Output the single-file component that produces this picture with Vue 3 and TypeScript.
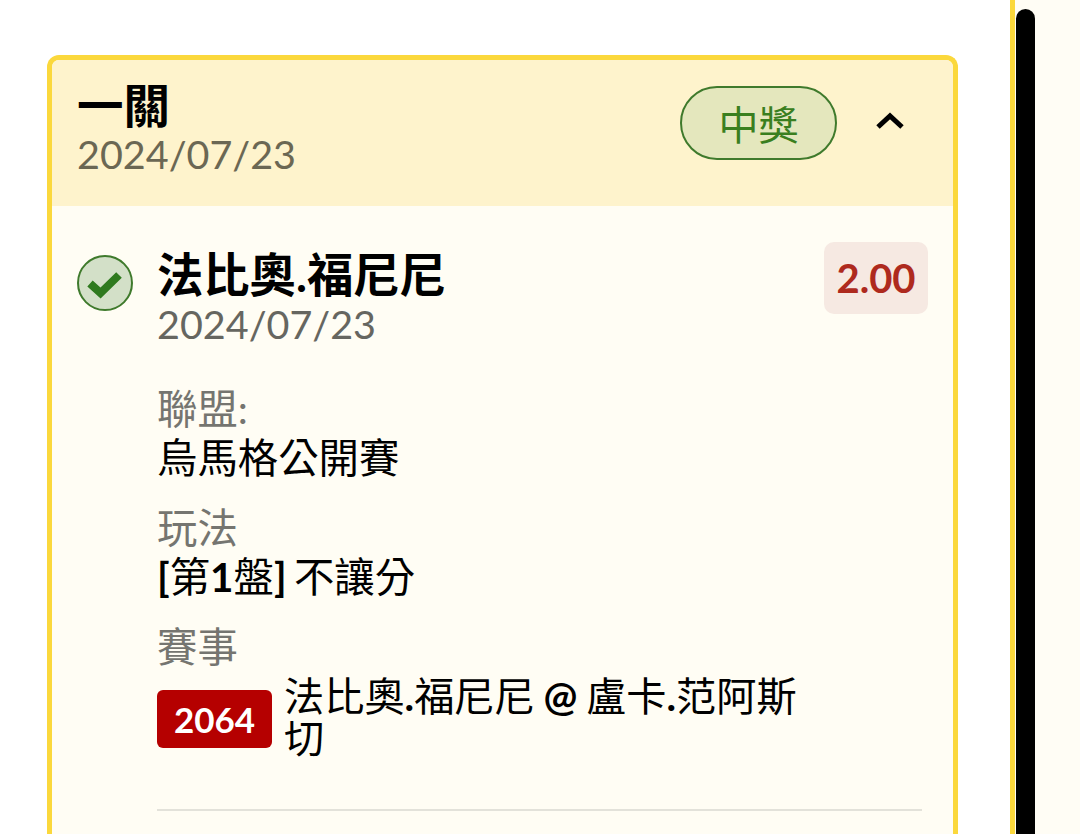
<script setup lang="ts">
</script>

<template>
  <div class="page">
    <main class="content">
      <section class="card">
        <header class="card-head">
          <div class="head-text">
            <div class="title">一關</div>
            <div class="date">2024/07/23</div>
          </div>
          <div class="head-right">
            <span class="pill">中獎</span>
            <svg class="chevron" width="30" height="20" viewBox="0 0 30 20" aria-hidden="true">
              <path d="M3 17 L15 6 L27 17" fill="none" stroke="#000" stroke-width="5" />
            </svg>
          </div>
        </header>
        <div class="card-body">
          <div class="leg-top">
            <svg class="check" width="56" height="56" viewBox="0 0 56 56" aria-hidden="true">
              <circle cx="28" cy="28" r="27" fill="#d3e0c8" stroke="#3f7a2c" stroke-width="2" />
              <path d="M13 28.500 L23.500 38 L42 20" fill="none" stroke="#2f7a1f" stroke-width="8" />
            </svg>
            <div class="leg-name">
              <div class="name">法比奧.福尼尼</div>
              <div class="date sub">2024/07/23</div>
            </div>
            <div class="odds">2.00</div>
          </div>
          <div class="details">
            <div class="row">
              <div class="label">聯盟:</div>
              <div class="value">烏馬格公開賽</div>
            </div>
            <div class="row">
              <div class="label">玩法</div>
              <div class="value"><b>[</b>第<b>1</b>盤<b>]</b> 不讓分</div>
            </div>
            <div class="row">
              <div class="label">賽事</div>
              <div class="match">
                <span class="code">2064</span>
                <span class="match-name">法比奧<b>.</b>福尼尼 <b>@</b> 盧卡<b>.</b>范阿斯切</span>
              </div>
            </div>
          </div>
          <div class="divider"></div>
        </div>
      </section>
    </main>
    <aside class="rail">
      <div class="thumb"></div>
    </aside>
  </div>
</template>

<style>
html, body { margin: 0; background: #fff; overflow: hidden; }
</style>

<style scoped>
.page {
  width: 1080px;
  height: 834px;
  overflow: hidden;
  display: flex;
  font-family: "Lato", "Noto Sans CJK TC", sans-serif;
  color: #000;
}
.content {
  width: 1010px;
  padding: 55px 52px 0 47px;
  box-sizing: border-box;
  background: #fff;
}
.card {
  border: 5px solid #fbd83c;
  border-bottom: 0;
  border-radius: 12px 12px 0 0;
  background: #fffdf4;
  height: 900px;
  box-sizing: border-box;
}
.card-head {
  height: 146px;
  background: #fef3cc;
  border-radius: 7px 7px 0 0;
  display: flex;
  justify-content: space-between;
  align-items: flex-start;
  padding: 20px 48px 0 25px;
  box-sizing: border-box;
}
.title {
  font-size: 46.500px;
  line-height: 50px;
  font-weight: 700;
}
.date {
  font-size: 39.500px;
  line-height: 47px;
  color: #6b6753;
}
.head-right {
  display: flex;
  align-items: center;
  gap: 38px;
  padding-top: 6px;
}
.pill {
  width: 157px;
  height: 74px;
  box-sizing: border-box;
  border: 2px solid #3f7a2c;
  border-radius: 37px;
  background: #e4e7bd;
  color: #3a7f1f;
  font-size: 40px;
  display: flex;
  align-items: center;
  justify-content: center;
}
.chevron { display: block; margin-top: -6px; }
.card-body { padding: 36px 25px 0 25px; }
.leg-top { display: flex; align-items: flex-start; }
.check { flex: none; margin-top: 13px; display: block; }
.leg-name { flex: 1; margin-left: 24px; }
.name {
  font-size: 46.300px;
  line-height: 52px;
  font-weight: 700;
  margin-top: 6px;
}
.sub { color: #666660; }
.odds {
  width: 104px;
  height: 72px;
  border-radius: 10px;
  background: #f6e9e2;
  color: #ae2a1e;
  font-size: 40px;
  font-weight: 700;
  display: flex;
  align-items: center;
  justify-content: center;
}
.details { margin: 38px 0 0 80px; }
.row { margin-bottom: 22px; }
.label {
  font-size: 40.400px;
  line-height: 48px;
  color: #757570;
}
.value {
  font-size: 40.400px;
  line-height: 48px;
  margin-top: 1px;
  word-spacing: -3px;
}
.value b, .match-name b { font-weight: 700; }
.match { display: flex; align-items: center; margin-top: 4px; }
.code {
  flex: none;
  width: 115px;
  height: 58px;
  border-radius: 6px;
  background: #b50000;
  color: #fff;
  font-size: 35px;
  font-weight: 700;
  display: flex;
  align-items: center;
  justify-content: center;
}
.match-name {
  width: 520px;
  margin: 0 0 4px 12px;
  font-size: 40.200px;
  line-height: 42px;
  word-spacing: -1.500px;
}
.divider {
  height: 2px;
  background: #e3e2da;
  margin: 46px 6px 0 80px;
}
.rail {
  width: 70px;
  height: 834px;
  border-left: 5px solid #fbd83c;
  background: #fffdf5;
  box-sizing: border-box;
  padding: 9px 0 0 1px;
}
.thumb {
  width: 19px;
  height: 900px;
  border-radius: 10px;
  background: #000;
}
</style>
